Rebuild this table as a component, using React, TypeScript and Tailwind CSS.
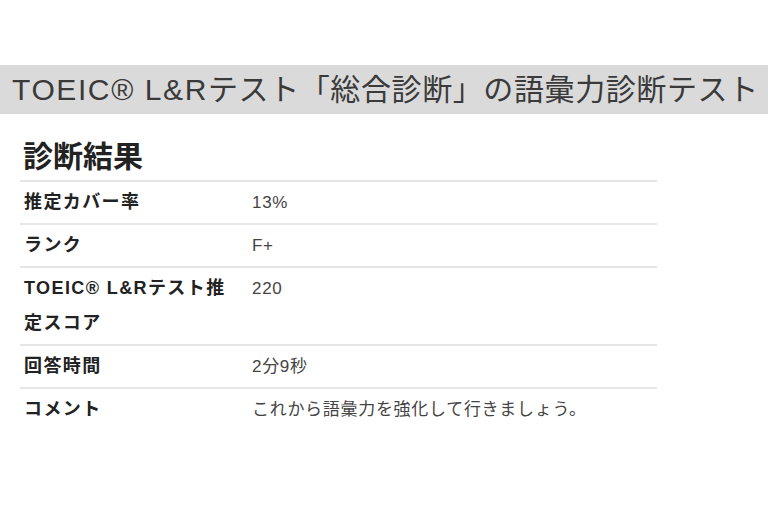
import React from "react";

const rows: { label: string; value: string }[] = [
  { label: "推定カバー率", value: "13%" },
  { label: "ランク", value: "F+" },
  { label: "TOEIC® L&Rテスト推定スコア", value: "220" },
  { label: "回答時間", value: "2分9秒" },
  { label: "コメント", value: "これから語彙力を強化して行きましょう。" },
];

export default function App() {
  return (
    <div
      className="w-[768px] h-[512px] bg-white overflow-hidden text-[#333]"
      style={{ fontFamily: '"Liberation Sans", "Noto Sans CJK JP", sans-serif' }}
    >
      <div className="h-[65px]" />
      <div className="h-[49px] bg-[#dadada] flex items-center pl-[12px] whitespace-nowrap">
        <h1 className="text-[30px] leading-none text-[#3a3a3a] tracking-[0.6px]">
          <span className="tracking-[1.6px]">TOEIC® L&amp;R</span>テスト「総合診断」の語彙力診断テスト
        </h1>
      </div>
      <div className="pl-[20px] w-[657px]">
        <h2 className="text-[30px] font-bold leading-[40px] pt-[23px] pb-[3px] pl-[3px] text-[#222]">診断結果</h2>
        <table className="w-full border-collapse">
          <tbody>
            {rows.map((r) => (
              <tr key={r.label} className="border-t-2 border-[#e6e6e6]">
                <td className="w-[228px] align-top px-[4px] py-[3px] leading-[35px] text-[18px] font-bold text-[#222] tracking-[1.4px]">
                  {r.label}
                </td>
                <td className="align-top px-[4px] py-[3px] leading-[35px] text-[17px] text-[#444] tracking-[0.7px]">{r.value}</td>
              </tr>
            ))}
          </tbody>
        </table>
      </div>
    </div>
  );
}
